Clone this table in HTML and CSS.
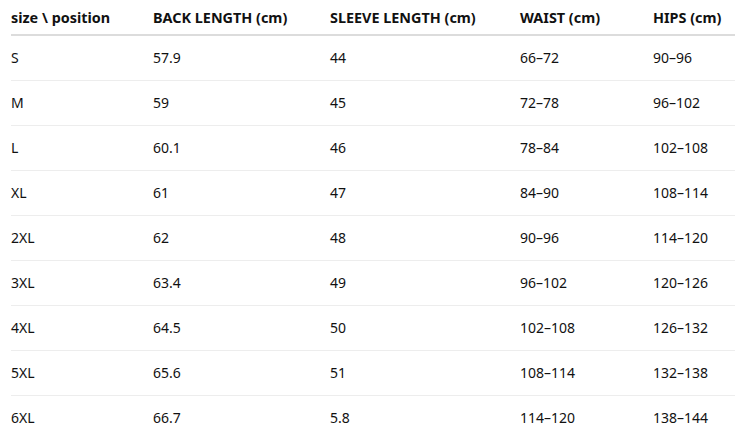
FILE: index.html
```html
<!DOCTYPE html>
<html>
<head>
<meta charset="utf-8">
<link rel="stylesheet" href="styles.css">
</head>
<body>
<table class="size-table">
  <colgroup>
    <col class="c1"><col class="c2"><col class="c3"><col class="c4"><col class="c5">
  </colgroup>
  <thead>
    <tr><th>size \ position</th><th>BACK LENGTH (cm)</th><th>SLEEVE LENGTH (cm)</th><th>WAIST (cm)</th><th>HIPS (cm)</th></tr>
  </thead>
  <tbody>
    <tr><td>S</td><td>57.9</td><td>44</td><td>66–72</td><td>90–96</td></tr>
    <tr><td>M</td><td>59</td><td>45</td><td>72–78</td><td>96–102</td></tr>
    <tr><td>L</td><td>60.1</td><td>46</td><td>78–84</td><td>102–108</td></tr>
    <tr><td>XL</td><td>61</td><td>47</td><td>84–90</td><td>108–114</td></tr>
    <tr><td>2XL</td><td>62</td><td>48</td><td>90–96</td><td>114–120</td></tr>
    <tr><td>3XL</td><td>63.4</td><td>49</td><td>96–102</td><td>120–126</td></tr>
    <tr><td>4XL</td><td>64.5</td><td>50</td><td>102–108</td><td>126–132</td></tr>
    <tr><td>5XL</td><td>65.6</td><td>51</td><td>108–114</td><td>132–138</td></tr>
    <tr><td>6XL</td><td>66.7</td><td>5.8</td><td>114–120</td><td>138–144</td></tr>
  </tbody>
</table>
</body>
</html>
```
FILE: styles.css
```css
html, body {
  margin: 0;
  padding: 0;
  background: #fff;
}
body {
  font-family: "Noto Sans", "Open Sans", sans-serif;
  font-size: 14px;
  color: #111;
  overflow: hidden;
}
.size-table {
  margin-left: 11px;
  width: 724px;
  border-collapse: collapse;
  table-layout: fixed;
}
.c1 { width: 142px; }
.c2 { width: 177px; }
.c3 { width: 190px; }
.c4 { width: 133px; }
.c5 { width: 82px; }
.size-table th,
.size-table td {
  padding: 0;
  text-align: left;
  white-space: nowrap;
  line-height: 20px;
}
.size-table th {
  font-weight: 700;
  font-size: 14.4px;
  height: 32px;
  padding-top: 2px;
  vertical-align: middle;
  border-bottom: 2px solid #dcdcdc;
}
.size-table td {
  height: 44px;
  vertical-align: middle;
  border-bottom: 1px solid #ededed;
}
.size-table tbody tr:last-child td {
  border-bottom: none;
}
```
